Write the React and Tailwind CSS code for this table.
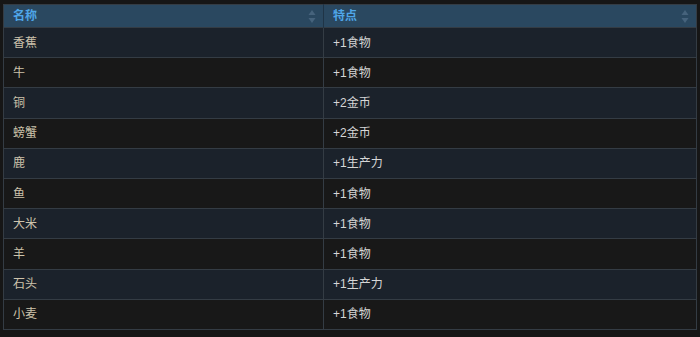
const rows = [
  ["香蕉", "+1食物"],
  ["牛", "+1食物"],
  ["铜", "+2金币"],
  ["螃蟹", "+2金币"],
  ["鹿", "+1生产力"],
  ["鱼", "+1食物"],
  ["大米", "+1食物"],
  ["羊", "+1食物"],
  ["石头", "+1生产力"],
  ["小麦", "+1食物"],
];

function SortIcon() {
  return (
    <svg width="8" height="15" viewBox="0 0 8 15" className="shrink-0">
      <path d="M4 1 L7.5 6 L0.5 6 Z" fill="#46637c" />
      <path d="M4 14 L7.5 9 L0.5 9 Z" fill="#46637c" />
    </svg>
  );
}

export default function App() {
  return (
    <div
      className="w-[700px] h-[337px] bg-[#161616] pt-[4px] pl-[3px] overflow-hidden"
      style={{ fontFamily: '"Liberation Sans", "Noto Sans CJK SC", sans-serif' }}
    >
      <table className="w-[694px] border-collapse text-[12px] border border-[#343c44]">
        <thead>
          <tr className="h-[23px] bg-[#2a4860]">
            <th className="w-[320px] pl-[9px] pr-[7px] text-left font-bold text-[#4fa6e8] border-r border-[#1f3446]">
              <div className="flex items-center justify-between">
                <span>名称</span>
                <SortIcon />
              </div>
            </th>
            <th className="pl-[9px] pr-[7px] text-left font-bold text-[#4fa6e8]">
              <div className="flex items-center justify-between">
                <span>特点</span>
                <SortIcon />
              </div>
            </th>
          </tr>
        </thead>
        <tbody>
          {rows.map(([name, trait], i) => (
            <tr
              key={name}
              className={
                "h-[30.2px] border-t border-[#343c44] " +
                (i % 2 === 0 ? "bg-[#1b222b]" : "bg-[#181818]")
              }
            >
              <td className="px-[9px] text-[#cdc3ab] border-r border-[#343c44]">
                {name}
              </td>
              <td className="px-[9px] text-[#d6d6d6]">{trait}</td>
            </tr>
          ))}
        </tbody>
      </table>
    </div>
  );
}
